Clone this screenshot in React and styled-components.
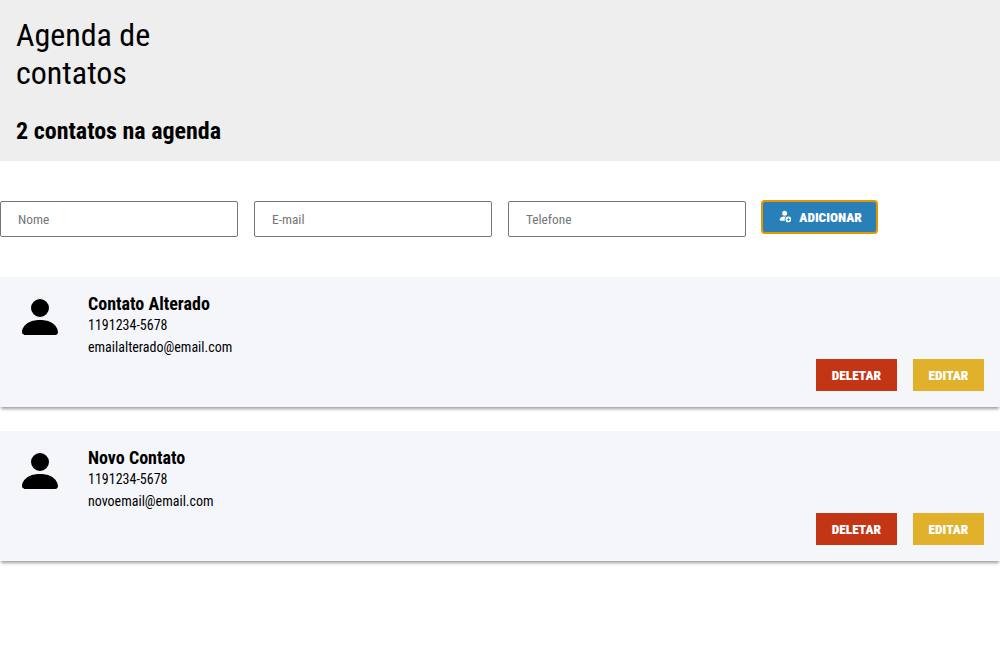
import React from "react";
import styled, { createGlobalStyle } from "styled-components";
import { BsPersonFill, BsPersonFillAdd } from "react-icons/bs";

const GlobalStyle = createGlobalStyle`
  * {
    margin: 0;
    padding: 0;
    box-sizing: border-box;
    font-family: "Roboto Condensed", Roboto, sans-serif;
    font-stretch: condensed;
  }
  body {
    background: #fff;
    color: #000;
  }
`;

const Header = styled.header`
  height: 161px;
  padding: 16px;
  background: #eee;
`;

const Title = styled.h1`
  width: 150px;
  font-size: 32px;
  line-height: 38px;
  font-weight: 400;
`;

const Counter = styled.h2`
  margin-top: 25px;
  font-size: 24px;
  line-height: 28px;
  font-weight: 700;
`;

const Form = styled.form`
  display: flex;
  align-items: flex-start;
  gap: 16px;
  margin: 40px 0;
`;

const Field = styled.input`
  width: 238px;
  height: 36px;
  padding: 0 17px;
  border: 1px solid #767676;
  border-radius: 2px;
  background: #fff;
  font-size: 13.333px;
  outline: none;

  &::placeholder {
    color: #757575;
    opacity: 1;
  }
`;

const AddButton = styled.button`
  display: flex;
  align-items: center;
  width: 117px;
  height: 34px;
  margin: -1px 0 0 -1px;
  padding-left: 15px;
  border: 2px solid #e59700;
  border-radius: 4px;
  background: #2980b9;
  color: #fff;
  font-size: 13.333px;
  font-weight: 900;

  svg {
    margin: -2px 8px 0 0;
  }
`;

const List = styled.ul`
  display: grid;
  gap: 24px;
  padding-bottom: 24px;
  list-style: none;
`;

const Card = styled.li`
  display: flex;
  height: 130px;
  padding: 16px;
  background: #f5f6fa;
  box-shadow: 0 3px 3px -1px rgba(0, 0, 0, 0.38);
`;

const Avatar = styled(BsPersonFill)`
  flex: none;
  width: 48px;
  height: 48px;
  margin-right: 24px;
`;

const Details = styled.div`
  flex: 1;
`;

const Name = styled.h3`
  font-size: 18px;
  line-height: 21px;
  font-weight: 700;
`;

const Info = styled.p`
  font-size: 14px;
  line-height: 22px;
  font-weight: 400;
`;

const Actions = styled.div`
  display: flex;
  align-self: flex-end;
  gap: 16px;
`;

const ActionButton = styled.button`
  width: ${(p) => p.$width}px;
  height: 32px;
  border: 0;
  background: ${(p) => p.$color};
  color: #fff;
  font-size: 13.333px;
  font-weight: 900;
`;

const contacts = [
  { name: "Contato Alterado", phone: "1191234-5678", email: "emailalterado@email.com" },
  { name: "Novo Contato", phone: "1191234-5678", email: "novoemail@email.com" },
];

export default function App() {
  return (
    <>
      <GlobalStyle />
      <Header>
        <Title>Agenda de contatos</Title>
        <Counter>{contacts.length} contatos na agenda</Counter>
      </Header>
      <Form>
        <Field placeholder="Nome" />
        <Field placeholder="E-mail" />
        <Field placeholder="Telefone" />
        <AddButton type="button">
          <BsPersonFillAdd />
          ADICIONAR
        </AddButton>
      </Form>
      <List>
        {contacts.map((c) => (
          <Card key={c.email}>
            <Avatar />
            <Details>
              <Name>{c.name}</Name>
              <Info>{c.phone}</Info>
              <Info>{c.email}</Info>
            </Details>
            <Actions>
              <ActionButton $width={81} $color="#c23616">DELETAR</ActionButton>
              <ActionButton $width={71} $color="#e1b12c">EDITAR</ActionButton>
            </Actions>
          </Card>
        ))}
      </List>
    </>
  );
}
